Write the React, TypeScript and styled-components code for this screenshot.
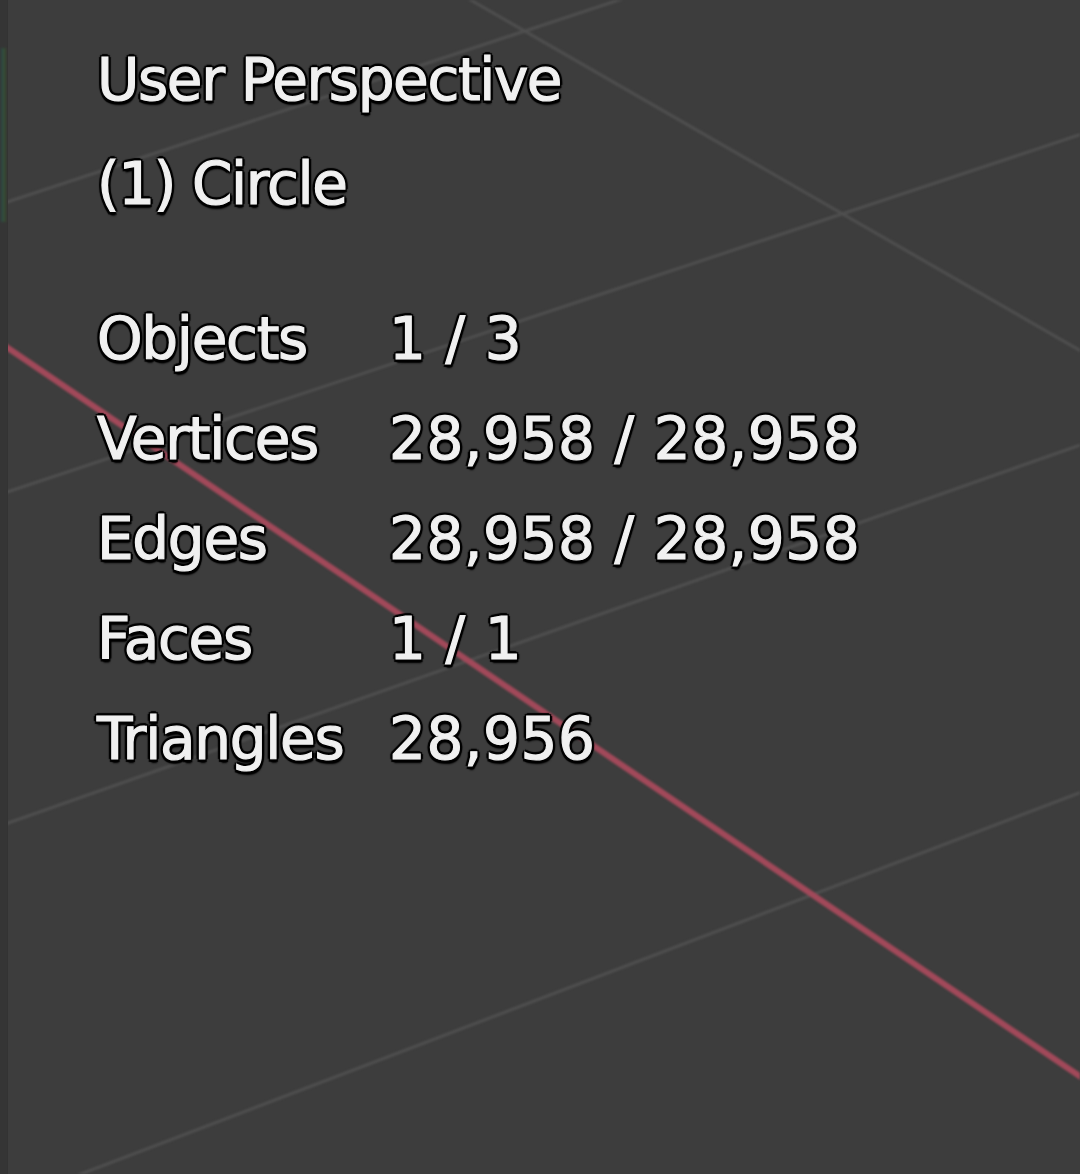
import { FC, Fragment } from 'react';
import styled, { createGlobalStyle } from 'styled-components';

const GlobalStyle = createGlobalStyle`
  html,
  body {
    margin: 0;
    padding: 0;
    background: #3d3d3d;
  }
`;

const Viewport = styled.main`
  position: relative;
  display: flex;

  width: 1080px;
  height: 1174px;
  overflow: hidden;

  background: #3d3d3d;
  font-family: 'DejaVu Sans', 'Liberation Sans', sans-serif;
`;

const RegionEdge = styled.div`
  position: relative;
  z-index: 1;
  flex-shrink: 0;

  width: 7px;
  height: 100%;

  background: #353535;
  border-right: 1px solid #333;
`;

const ToolbarAccent = styled.div`
  width: 5px;
  height: 174px;
  margin-top: 48px;
  margin-left: 1px;

  background: linear-gradient(90deg, #2c4a48, #3a4a2c);
  filter: blur(0.8px);
`;

const GridLayer = styled.svg`
  position: absolute;
  inset: 0;
  filter: blur(0.8px);
`;

const Overlay = styled.section`
  position: relative;
  z-index: 1;

  padding: 28px 0 0 89px;

  color: #f0f0f0;
  font-size: 58px;
  -webkit-text-stroke: 1.2px #f0f0f0;
  filter: blur(0.7px);
  text-shadow:
    -3px 0 1px #000,
    3px 0 1px #000,
    0 -3px 1px #000,
    0 3px 1px #000,
    -2px -2px 1px #000,
    2px -2px 1px #000,
    -2px 3px 1px #000,
    2px 3px 1px #000,
    1px 4px 2px #000;
`;

const TitleLine = styled.div`
  line-height: 104px;
  letter-spacing: -1.4px;
  white-space: nowrap;
`;

const Stats = styled.div`
  display: grid;
  grid-template-columns: 292px auto;

  margin-top: 53px;

  line-height: 100px;
  white-space: nowrap;
`;

const Label = styled.span`
  letter-spacing: -1.3px;
`;

const Value = styled.span`
  letter-spacing: 0.6px;
`;

type Stat = {
  label: string;
  value: string;
};

const stats: Stat[] = [
  { label: 'Objects', value: '1 / 3' },
  { label: 'Vertices', value: '28,958 / 28,958' },
  { label: 'Edges', value: '28,958 / 28,958' },
  { label: 'Faces', value: '1 / 1' },
  { label: 'Triangles', value: '28,956' },
];

// floor grid seen in perspective, plus the red X axis
const Grid: FC = () => (
  <GridLayer width="1080" height="1174" viewBox="0 0 1080 1174">
    <g stroke="#4f4f4f" strokeWidth="3" strokeLinecap="round">
      <line x1="-20" y1="211" x2="640" y2="-7" />
      <line x1="-20" y1="501" x2="1100" y2="128" />
      <line x1="-20" y1="833" x2="1100" y2="438" />
      <line x1="60" y1="1182" x2="1100" y2="785" />
      <line x1="455" y1="-9" x2="1100" y2="362" />
    </g>
    <line x1="-20" y1="329" x2="1100" y2="1090" stroke="#a2495a" strokeWidth="6" />
  </GridLayer>
);

const App: FC = () => (
  <>
    <GlobalStyle />
    <Viewport>
      <Grid />
      <RegionEdge>
        <ToolbarAccent />
      </RegionEdge>
      <Overlay>
        <TitleLine>User Perspective</TitleLine>
        <TitleLine>(1) Circle</TitleLine>
        <Stats>
          {stats.map(({ label, value }) => (
            <Fragment key={label}>
              <Label>{label}</Label>
              <Value>{value}</Value>
            </Fragment>
          ))}
        </Stats>
      </Overlay>
    </Viewport>
  </>
);

export default App;
